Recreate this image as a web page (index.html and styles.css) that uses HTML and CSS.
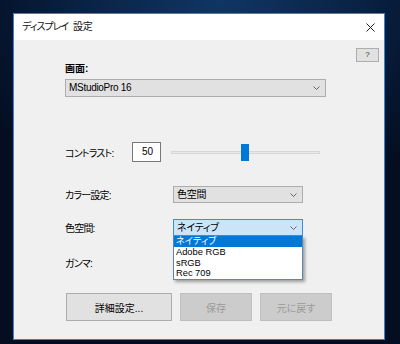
FILE: index.html
```html
<!DOCTYPE html>
<html lang="ja">
<head>
  <meta charset="UTF-8">
  <title>ディスプレイ 設定</title>
  <link rel="stylesheet" href="styles.css">
</head>
<body>
  <div class="desktop">
    <div class="window">
      <div class="titlebar">
        <span class="title">ディスプレイ <span class="title-word">設定</span></span>
        <svg class="close" width="9" height="9" viewBox="0 0 9 9"><path d="M0.5 0.5 L8.5 8.5 M8.5 0.5 L0.5 8.5" stroke="#222" stroke-width="1" fill="none"/></svg>
      </div>

      <div class="content">
        <div class="help-row"><div class="btn-help">?</div></div>

        <div class="label-top">画面:</div>
        <div class="select select-wide">
          <span>MStudioPro 16</span>
          <svg class="chev" width="7" height="4" viewBox="0 0 7 4"><path d="M0.5 0.5 L3.5 3.5 L6.5 0.5" stroke="#666" fill="none"/></svg>
        </div>

        <div class="row row-contrast">
          <span class="label label-short">コントラスト:</span>
          <div class="value-box">50</div>
          <div class="slider">
            <div class="track"></div>
            <div class="thumb"></div>
          </div>
        </div>

        <div class="row row-color">
          <span class="label">カラー設定:</span>
          <div class="select select-mid">
            <span>色空間</span>
            <svg class="chev" width="7" height="4" viewBox="0 0 7 4"><path d="M0.5 0.5 L3.5 3.5 L6.5 0.5" stroke="#666" fill="none"/></svg>
          </div>
        </div>

        <div class="row row-space">
          <span class="label">色空間:</span>
          <div class="select select-mid select-open">
            <span>ネイティブ</span>
            <svg class="chev" width="7" height="4" viewBox="0 0 7 4"><path d="M0.5 0.5 L3.5 3.5 L6.5 0.5" stroke="#666" fill="none"/></svg>
            <ul class="dropdown">
              <li class="selected">ネイティブ</li>
              <li>Adobe RGB</li>
              <li>sRGB</li>
              <li>Rec 709</li>
            </ul>
          </div>
        </div>

        <div class="row row-gamma">
          <span class="label">ガンマ:</span>
        </div>

        <div class="buttons">
          <div class="btn btn-detail">詳細設定...</div>
          <div class="btn btn-disabled">保存</div>
          <div class="btn btn-disabled">元に戻す</div>
        </div>
      </div>
    </div>
  </div>
</body>
</html>
```

FILE: styles.css
```css
* { margin: 0; padding: 0; box-sizing: border-box; }
body { width: 400px; height: 344px; overflow: hidden; font-family: "Liberation Sans Narrow", "Liberation Sans", "Noto Sans CJK JP", sans-serif; font-size: 10px; color: #000; font-feature-settings: "palt"; }
.desktop { width: 400px; height: 344px; padding: 13px 0 0 13px; background: radial-gradient(ellipse 70% 60% at 55% 0%, #0f3664 0%, #0a2447 45%, #061630 75%, #040e20 100%); }
.window { width: 372px; height: 327px; border: 1px solid #2f86d6; background: #f0f0f0; display: flex; flex-direction: column; }
.titlebar { height: 26px; background: #fff; display: flex; align-items: center; justify-content: space-between; padding: 0 9px 0 8px; }
.title { font-size: 10px; line-height: 12px; color: #111; letter-spacing: -1px; }
.title-word { margin-left: 3px; letter-spacing: -0.3px; }
.close { display: block; }
.content { flex: 1; padding-left: 51px; }
.help-row { display: flex; justify-content: flex-end; padding: 8px 5px 0 0; }
.btn-help { width: 23px; height: 14px; background: #e1e1e1; border: 1px solid #adadad; font-size: 8px; line-height: 12px; text-align: center; color: #333; }
.label-top { height: 14px; line-height: 14px; font-weight: bold; }
.select { position: relative; background: #e1e1e1; border: 1px solid #adadad; display: flex; align-items: center; justify-content: space-between; padding: 0 5px 0 3px; }
.select span { line-height: 12px; letter-spacing: -0.3px; }
.chev { display: block; }
.select-wide { width: 261px; height: 18px; margin-top: 3px; }
.select-mid { width: 130px; height: 17px; }
.select-open { background: #cce4f7; border-color: #3d8ee0; }
.row { display: flex; align-items: center; }
.label { width: 108px; letter-spacing: -0.8px; }
.label-short { width: 67px; }
.row-contrast { height: 20px; margin-top: 45px; }
.value-box { width: 29px; height: 20px; background: #fff; border: 1px solid #7a7a7a; line-height: 18px; padding-left: 9px; }
.slider { position: relative; width: 149px; height: 20px; margin-left: 10px; display: flex; align-items: center; }
.track { width: 100%; height: 3px; background: #e7eaea; border: 1px solid #d6d6d6; }
.thumb { position: absolute; left: 70px; top: 2px; width: 8px; height: 17px; background: #0078d7; }
.row-color { height: 17px; margin-top: 24px; }
.row-space { height: 17px; margin-top: 16px; position: relative; z-index: 2; }
.dropdown { position: absolute; left: -1px; top: 16px; width: 130px; list-style: none; background: #fff; border: 1px solid #5f87b3; border-top: none; box-shadow: 2px 2px 3px rgba(0, 0, 0, 0.35); font-size: 9.3px; }
.dropdown li { height: 10.75px; line-height: 10.75px; padding-left: 2px; }
.dropdown li.selected { background: #0078d7; color: #fff; }
.row-gamma { height: 17px; margin-top: 18px; }
.buttons { display: flex; gap: 8px; margin: 22px 0 0 1px; }
.btn { height: 28px; border: 1px solid #adadad; background: #e1e1e1; display: flex; align-items: center; justify-content: center; }
.btn-detail { width: 106px; }
.btn-disabled { width: 72px; background: #cccccc; border-color: #bfbfbf; color: #9a9a9a; }
```
